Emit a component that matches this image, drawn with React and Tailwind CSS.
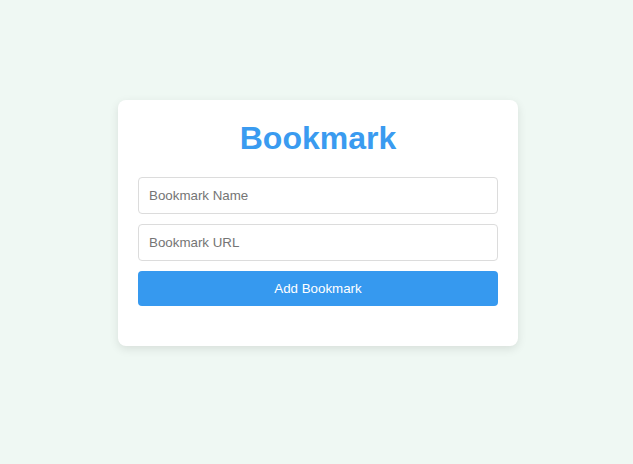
import React, { useState } from "react";

const App = () => {
  const [name, setName] = useState("");
  const [url, setUrl] = useState("");

  return (
    <div className="min-h-[464px] w-full bg-[#eff8f3] flex justify-center items-start pt-[100px] pl-[3px] font-['Liberation_Sans',Arial,sans-serif]">
      <div className="w-[400px] bg-white rounded-lg p-5 pb-10 shadow-[0_3px_10px_rgba(0,0,0,0.1)]">
        <h1 className="text-center text-[32px] leading-[37px] font-bold text-[#3a9bf0] mb-5">
          Bookmark
        </h1>
        <div className="flex flex-col gap-[10px]">
          <input
            value={name}
            onChange={(e) => setName(e.target.value)}
            placeholder="Bookmark Name"
            className="h-[37px] w-full px-[10px] border border-[#dcdcdc] rounded text-[13.33px] text-gray-800 placeholder:text-[#757575] outline-none"
          />
          <input
            value={url}
            onChange={(e) => setUrl(e.target.value)}
            placeholder="Bookmark URL"
            className="h-[37px] w-full px-[10px] border border-[#dcdcdc] rounded text-[13.33px] text-gray-800 placeholder:text-[#757575] outline-none"
          />
          <button className="h-[35px] w-full bg-[#3699ef] text-white text-[13.33px] rounded">
            Add Bookmark
          </button>
        </div>
      </div>
    </div>
  );
};

export default App;
